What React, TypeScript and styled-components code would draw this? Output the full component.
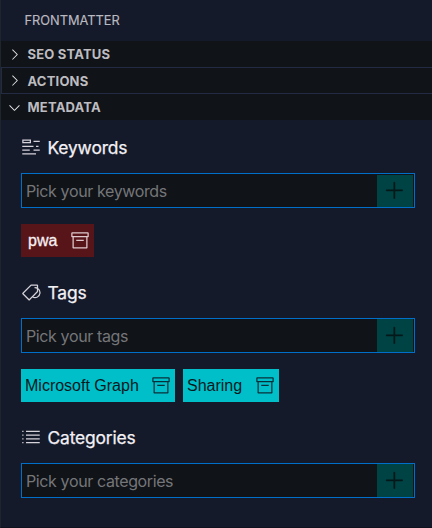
import React from "react";
import styled, { createGlobalStyle } from "styled-components";
import {
  VscAdd,
  VscArchive,
  VscChevronDown,
  VscChevronRight,
  VscListUnordered,
  VscSymbolKeyword,
  VscTag,
} from "react-icons/vsc";

const GlobalStyle = createGlobalStyle`
  * { box-sizing: border-box; }
  body { margin: 0; background: #141a29; }
`;

const Panel = styled.main`
  height: 528px;
  overflow: hidden;
  background: #141a29;
  border-left: 1px solid #20252d;
  border-bottom: 1px solid #10121e;
  font-family: Inter, sans-serif;
`;

const PanelTitle = styled.h1`
  margin: 0;
  height: 41px;
  padding-left: 23.5px;
  font-size: 12.8px;
  font-weight: 400;
  line-height: 41px;
  color: #bbb9c0;
  -webkit-text-stroke: 0.15px;
`;

const SectionHeader = styled.div<{ $outlined?: boolean }>`
  display: flex;
  align-items: center;
  height: ${(p) => (p.$outlined ? 27 : 26)}px;
  padding-left: ${(p) => (p.$outlined ? 4 : 5)}px;
  gap: 4.5px;
  border: 0 solid #222a44;
  border-width: ${(p) => (p.$outlined ? "1px 0 1px 1px" : "0")};
  background: #101317;
  color: #bdbcc0;
  font-size: 13px;
  letter-spacing: 0.2px;
  font-weight: 700;
  svg { width: 17px; height: 17px; color: #e4e4e8; }
`;

const Metadata = styled.div`
  padding: 17px 17px 0 20px;
`;

const Field = styled.section`
  height: 145px;
`;

const FieldTitle = styled.h2`
  display: flex;
  align-items: center;
  gap: 6.5px;
  height: 20px;
  margin: 0 0 16px;
  color: #f3f0f5;
  font-size: 17.4px;
  font-weight: 400;
  letter-spacing: -0.15px;
  -webkit-text-stroke: 0.25px;
  svg { width: 20px; height: 20px; margin-top: -1px; color: #d5d2da; }
`;

const InputBox = styled.div`
  display: flex;
  height: 35px;
  padding-right: 1px;
  border: 1px solid #006fc9;
  background: #101317;
`;

const Input = styled.input`
  flex: 1;
  min-width: 0;
  padding: 0 4px;
  border: 0;
  outline: 0;
  background: transparent;
  font: 400 16px Inter, sans-serif;
  letter-spacing: -0.38px;
  &::placeholder { color: #75767a; opacity: 1; }
`;

const AddButton = styled.button<{ $inset?: boolean }>`
  display: flex;
  align-items: center;
  justify-content: center;
  width: 36px;
  margin: ${(p) => (p.$inset ? "1px 0 0" : "0")};
  padding: 0;
  border: 0;
  background: #004345;
  color: #06191b;
  svg { width: 20px; height: 20px; stroke: currentColor; stroke-width: 0.4px; }
`;

const Chips = styled.div`
  display: flex;
  gap: 8px;
  margin-top: 16px;
`;

const Chip = styled.button<{ $unknown?: boolean; $width: number }>`
  display: flex;
  align-items: center;
  justify-content: space-between;
  width: ${(p) => p.$width}px;
  height: 33px;
  padding: 0 4px 0 ${(p) => (p.$unknown ? 7 : 4)}px;
  border: 0;
  background: ${(p) => (p.$unknown ? "#57151a" : "#00bfc9")};
  color: ${(p) => (p.$unknown ? "#f7eff1" : "#08191d")};
  font: 400 16px "Liberation Sans", Arial, sans-serif;
  -webkit-text-stroke: ${(p) => (p.$unknown ? "0.3px" : "0")};
  white-space: nowrap;
  svg { width: 20px; height: 20px; color: ${(p) => (p.$unknown ? "#e0c9cd" : "#08303a")}; }
`;

type ChipData = { label: string; width: number; unknown?: boolean };
type FieldData = {
  name: string;
  icon: React.ReactNode;
  inset?: boolean;
  chips: ChipData[];
};

const fields: FieldData[] = [
  {
    name: "Keywords",
    icon: <VscSymbolKeyword />,
    inset: true,
    chips: [{ label: "pwa", width: 73, unknown: true }],
  },
  {
    name: "Tags",
    icon: <VscTag />,
    chips: [
      { label: "Microsoft Graph", width: 154 },
      { label: "Sharing", width: 96 },
    ],
  },
  { name: "Categories", icon: <VscListUnordered />, chips: [] },
];

export default function App() {
  return (
    <>
      <GlobalStyle />
      <Panel>
        <PanelTitle>FRONTMATTER</PanelTitle>
        <SectionHeader><VscChevronRight />SEO STATUS</SectionHeader>
        <SectionHeader $outlined><VscChevronRight />ACTIONS</SectionHeader>
        <SectionHeader><VscChevronDown />METADATA</SectionHeader>
        <Metadata>
          {fields.map((field) => (
            <Field key={field.name}>
              <FieldTitle>{field.icon}{field.name}</FieldTitle>
              <InputBox>
                <Input placeholder={`Pick your ${field.name.toLowerCase()}`} />
                <AddButton $inset={field.inset} aria-label="Add"><VscAdd /></AddButton>
              </InputBox>
              <Chips>
                {field.chips.map((chip) => (
                  <Chip key={chip.label} $width={chip.width} $unknown={chip.unknown}>
                    {chip.label}<VscArchive />
                  </Chip>
                ))}
              </Chips>
            </Field>
          ))}
        </Metadata>
      </Panel>
    </>
  );
}
